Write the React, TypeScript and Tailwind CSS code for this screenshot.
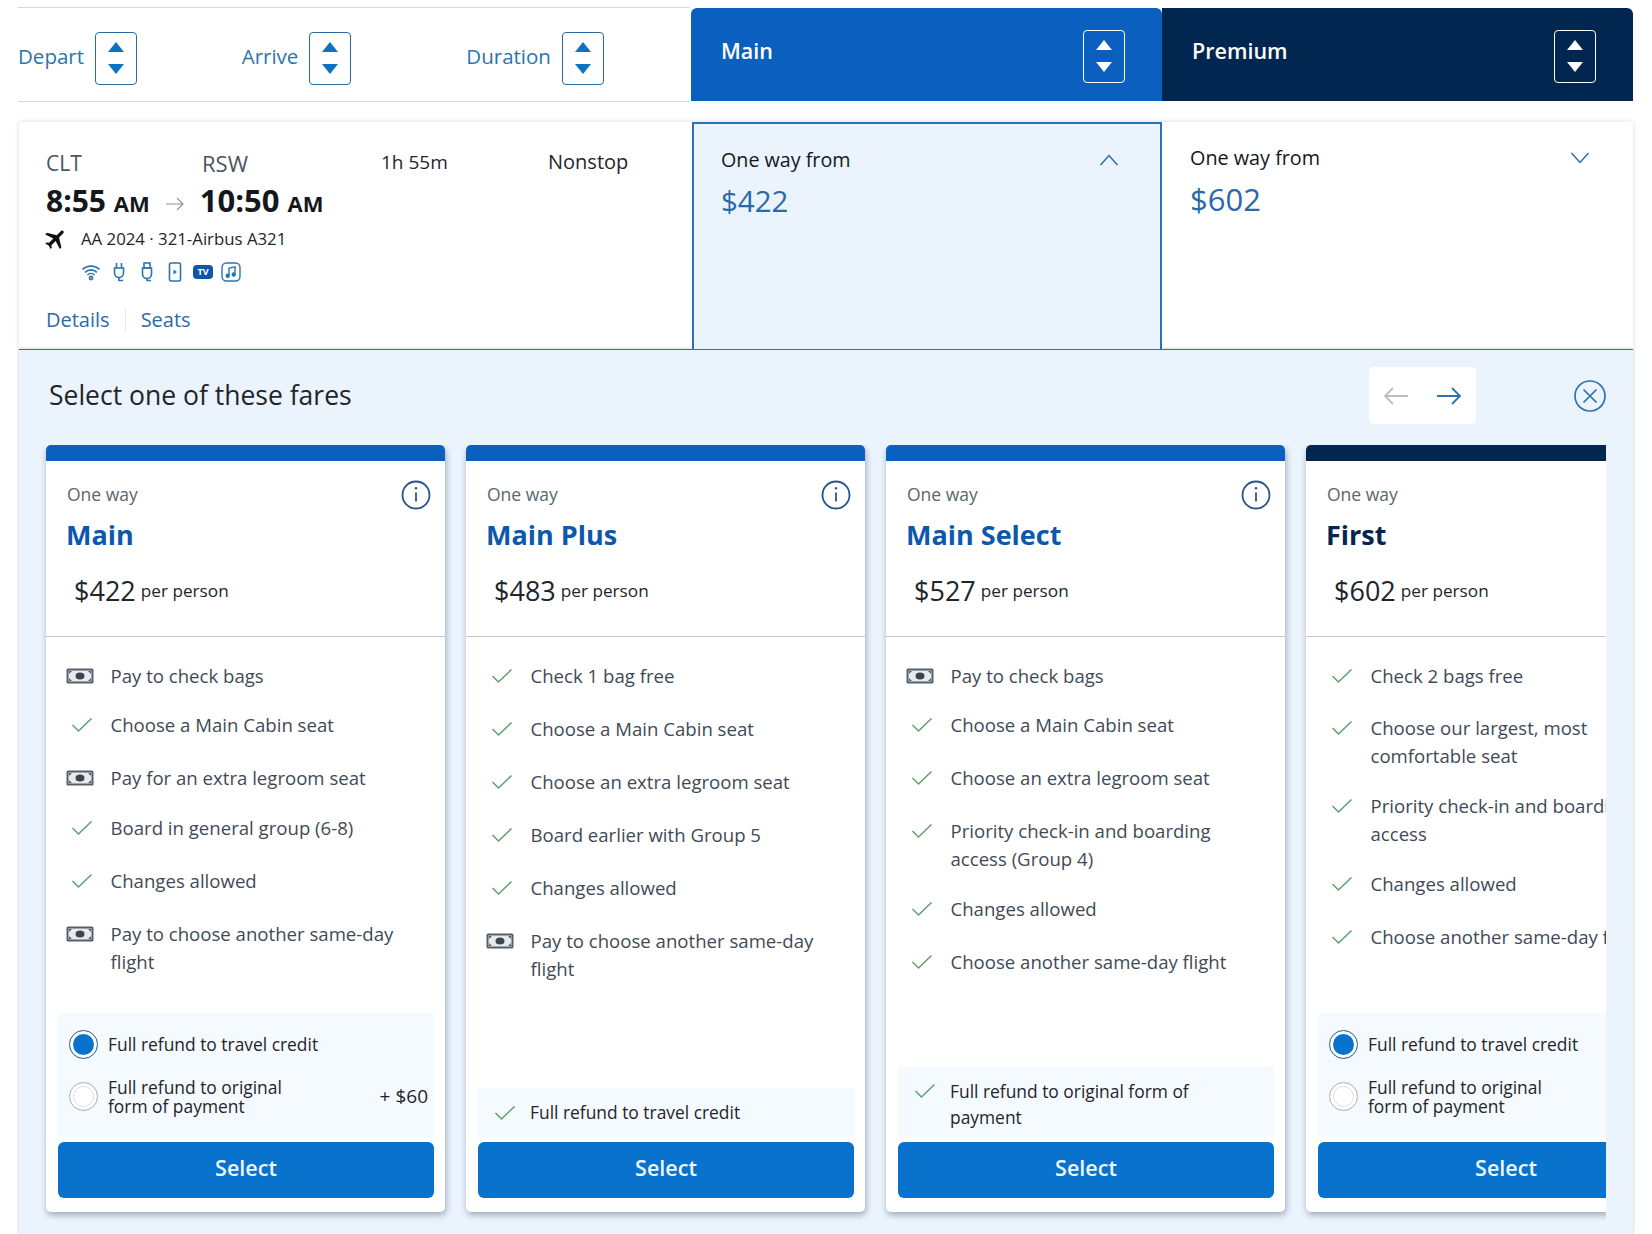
const sans = "font-['Open_Sans','Noto_Sans',sans-serif]";

function SortBox({ light }: { light?: boolean }) {
  const fill = light ? '#ffffff' : '#0b72c4';
  return (
    <div className={`w-[42px] h-[53px] shrink-0 rounded-[4px] border flex items-center justify-center ${light ? 'border-white' : 'border-[#2a6a9c]'}`}>
      <svg width="18" height="36" viewBox="0 0 18 36">
        <path d="M9 2 L17 12 H1 Z" fill={fill} />
        <path d="M9 34 L1 24 H17 Z" fill={fill} />
      </svg>
    </div>
  );
}

function SortItem({ label, w }: { label: string; w: string }) {
  return (
    <div className={`flex items-center gap-[11px] ${w}`}>
      <span className="text-[20.5px] -mt-[4px] text-[#2b74ad]">{label}</span>
      <SortBox />
    </div>
  );
}

function Check() {
  return (
    <svg width="22" height="16" viewBox="0 0 22 16" fill="none" stroke="#5f9f70" strokeWidth="1.5">
      <path d="M1.5 8 L7.5 14 L20.5 1.5" />
    </svg>
  );
}

function Money() {
  return (
    <svg width="28" height="16" viewBox="0 0 28 16">
      <rect x="0.5" y="0.5" width="27" height="15" rx="1.5" fill="#56606b" />
      <rect x="2.5" y="2.5" width="23" height="11" fill="#e8ebee" />
      <ellipse cx="14" cy="8" rx="4.5" ry="3.5" fill="#3c4650" />
      <path d="M3 3h3l-3 3zM25 3h-3l3 3zM3 13h3l-3-3zM25 13h-3l3-3z" fill="#56606b" />
    </svg>
  );
}

function Amenities() {
  const c = '#2b74ad';
  return (
    <div className="flex items-center gap-[8px] ml-[35px] mt-[10px] h-[22px]">
      <svg width="20" height="20" viewBox="0 0 20 20" fill="none" stroke={c} strokeWidth="1.6">
        <path d="M1.5 7.5 C6 3 14 3 18.5 7.5" />
        <path d="M4 10.3 C7.5 7 12.5 7 16 10.3" />
        <path d="M6.5 13 C8.5 11 11.5 11 13.5 13" />
        <circle cx="10" cy="16" r="1.6" />
      </svg>
      <svg width="20" height="20" viewBox="0 0 20 20" fill="none" stroke={c} strokeWidth="1.6">
        <path d="M7.5 1v5M12.5 1v5" />
        <path d="M5.5 6h9v5a4.5 4.5 0 0 1-9 0z" />
        <path d="M10 15.5v3h4" />
      </svg>
      <svg width="20" height="20" viewBox="0 0 20 20" fill="none" stroke={c} strokeWidth="1.6">
        <rect x="7" y="1" width="6" height="5" />
        <path d="M5.5 6h9v6a4.5 4.5 0 0 1-9 0z" />
        <path d="M10 16.5v2h4" />
      </svg>
      <svg width="20" height="20" viewBox="0 0 20 20" fill="none" stroke={c} strokeWidth="1.6">
        <rect x="4.5" y="1" width="11" height="18" rx="1.5" />
        <path d="M8.5 7.5 L12 10 L8.5 12.5 Z" fill={c} stroke="none" />
      </svg>
      <div className="w-[20px] h-[14px] rounded-[4px] bg-[#0d56a8] text-white text-[9px] font-bold leading-[14px] text-center">TV</div>
      <svg width="20" height="20" viewBox="0 0 20 20" fill="none" stroke={c} strokeWidth="1.4">
        <rect x="1" y="1" width="18" height="18" rx="4.5" />
        <path d="M8 13.5V6l6-1.2v7.5" strokeWidth="1.4" />
        <circle cx="6.7" cy="13.7" r="1.5" fill={c} />
        <circle cx="12.7" cy="12.5" r="1.5" fill={c} />
      </svg>
    </div>
  );
}

function Radio({ on }: { on?: boolean }) {
  return (
    <div className={`w-[29px] h-[29px] shrink-0 rounded-full border flex items-center justify-center bg-white ${on ? 'border-[#1b5c96]' : 'border-[#a9adb1]'}`}>
      <div className={`w-[21px] h-[21px] rounded-full ${on ? 'bg-[#0972cc]' : 'bg-white border border-[#dcdfe2]'}`} />
    </div>
  );
}

function RefundChoice({ extra }: { extra?: boolean }) {
  return (
    <div className="h-[124px] bg-[#f5faff] pl-[11px] pr-[6px] pt-[17px] text-[17.4px] text-[#1f252b]">
      <div className="flex items-center gap-[10px] h-[29px]">
        <Radio on />
        <span>Full refund to travel credit</span>
      </div>
      <div className="flex items-center gap-[10px] h-[40px] mt-[17px]">
        <Radio />
        <span className="leading-[19px] whitespace-pre flex-1 mt-[1px]">{'Full refund to original\nform of payment'}</span>
        {extra && <span className="text-[19px]">+ $60</span>}
      </div>
    </div>
  );
}

type Feat = { k: 'c' | 'm'; t: string; g: string };

const cards: { name: string; price: string; dark?: boolean; feats: Feat[]; bottom: React.ReactNode }[] = [
  {
    name: 'Main',
    price: '$422',
    feats: [
      { k: 'm', t: 'Pay to check bags', g: 'mb-[21px]' },
      { k: 'c', t: 'Choose a Main Cabin seat', g: 'mb-[25px]' },
      { k: 'm', t: 'Pay for an extra legroom seat', g: 'mb-[22px]' },
      { k: 'c', t: 'Board in general group (6-8)', g: 'mb-[25px]' },
      { k: 'c', t: 'Changes allowed', g: 'mb-[25px]' },
      { k: 'm', t: 'Pay to choose another same-day\nflight', g: '' },
    ],
    bottom: <RefundChoice extra />,
  },
  {
    name: 'Main Plus',
    price: '$483',
    feats: [
      { k: 'c', t: 'Check 1 bag free', g: 'mb-[25px]' },
      { k: 'c', t: 'Choose a Main Cabin seat', g: 'mb-[25px]' },
      { k: 'c', t: 'Choose an extra legroom seat', g: 'mb-[25px]' },
      { k: 'c', t: 'Board earlier with Group 5', g: 'mb-[25px]' },
      { k: 'c', t: 'Changes allowed', g: 'mb-[25px]' },
      { k: 'm', t: 'Pay to choose another same-day\nflight', g: '' },
    ],
    bottom: (
      <div className="h-[49px] bg-[#f5faff] flex items-center gap-[14px] pl-[16px] text-[17.4px] text-[#1f252b]">
        <Check />
        <span>Full refund to travel credit</span>
      </div>
    ),
  },
  {
    name: 'Main Select',
    price: '$527',
    feats: [
      { k: 'm', t: 'Pay to check bags', g: 'mb-[21px]' },
      { k: 'c', t: 'Choose a Main Cabin seat', g: 'mb-[25px]' },
      { k: 'c', t: 'Choose an extra legroom seat', g: 'mb-[25px]' },
      { k: 'c', t: 'Priority check-in and boarding\naccess (Group 4)', g: 'mb-[22px]' },
      { k: 'c', t: 'Changes allowed', g: 'mb-[25px]' },
      { k: 'c', t: 'Choose another same-day flight', g: '' },
    ],
    bottom: (
      <div className="h-[70px] bg-[#f5faff] flex items-center gap-[14px] pl-[16px] text-[17.4px] leading-[26px] text-[#1f252b]">
        <div className="self-start mt-[16px]"><Check /></div>
        <span className="whitespace-pre mt-[3px]">{'Full refund to original form of\npayment'}</span>
      </div>
    ),
  },
  {
    name: 'First',
    price: '$602',
    dark: true,
    feats: [
      { k: 'c', t: 'Check 2 bags free', g: 'mb-[24px]' },
      { k: 'c', t: 'Choose our largest, most\ncomfortable seat', g: 'mb-[22px]' },
      { k: 'c', t: 'Priority check-in and boarding\naccess', g: 'mb-[22px]' },
      { k: 'c', t: 'Changes allowed', g: 'mb-[25px]' },
      { k: 'c', t: 'Choose another same-day flight', g: '' },
    ],
    bottom: <RefundChoice />,
  },
];

function FareCard({ c }: { c: (typeof cards)[number] }) {
  return (
    <div className="w-[399px] h-[767px] shrink-0 flex flex-col bg-white rounded-[5px] shadow-[1px_3px_6px_rgba(40,60,90,0.4)]">
      <div className={`h-[16px] rounded-t-[5px] ${c.dark ? 'bg-[#01264f]' : 'bg-[#0b5fbf]'}`} />
      <div className="h-[176px] border-b border-[#c4c7ca] relative">
        <div className="pl-[21px] pt-[21px] text-[17.5px] leading-[24px] text-[#5a6670]">One way</div>
        <div className={`pl-[20px] mt-[12px] text-[27px] leading-[34px] font-bold ${c.dark ? 'text-[#01264f]' : 'text-[#0b58ad]'}`}>{c.name}</div>
        <div className="pl-[28px] mt-[21px] flex items-center gap-[5px] leading-[36px] text-[#20262c]">
          <span className="text-[27px]">{c.price}</span>
          <span className="text-[17.2px]">per person</span>
        </div>
        <svg className="absolute top-[19px] right-[14px]" width="30" height="30" viewBox="0 0 30 30" fill="none" stroke="#27548a" strokeWidth="1.8">
          <circle cx="15" cy="15" r="13.5" />
          <path d="M15 12.5v9" />
          <circle cx="15" cy="8.2" r="1.2" fill="#27548a" stroke="none" />
        </svg>
      </div>
      <div className="flex-1 pt-[25px] text-[18.6px] leading-[28px] text-[#3f4a56]">
        {c.feats.map((f) => (
          <div key={f.t} className={`flex ${f.g}`}>
            <div className="w-[64.5px] h-[28px] shrink-0 flex items-center pl-[20px]">
              {f.k === 'c' ? <div className="ml-[5px] flex"><Check /></div> : <Money />}
            </div>
            <div className="whitespace-pre">{f.t}</div>
          </div>
        ))}
      </div>
      <div className="pl-[12px] pr-[11px]">{c.bottom}</div>
      <div className="pl-[12px] pr-[11px] pt-[5px] pb-[14px]">
        <div className="h-[56px] pb-[4px] rounded-[6px] bg-[#0972cc] flex items-center justify-center text-[21.5px] font-semibold text-[#eef7ff]">Select</div>
      </div>
    </div>
  );
}

export default function App() {
  return (
    <div className={`w-[1652px] h-[1234px] overflow-hidden bg-white ${sans}`}>
      <div className="ml-[19px] w-[1614px] pt-[7px] flex">
        <div className="w-[672px] h-[95px] border-y border-[#d8d8d8] flex items-center pt-[7px] -ml-px">
          <SortItem label="Depart" w="w-[224px]" />
          <SortItem label="Arrive" w="w-[225px]" />
          <SortItem label="Duration" w="w-[224px]" />
        </div>
        <div className="w-[471px] h-[93px] mt-[1px] ml-px bg-[#0b5fbf] rounded-tl-[6px] rounded-tr-[6px] flex items-center justify-between pl-[30px] pr-[37px] text-white">
          <span className="text-[21.5px] font-semibold -mt-[6px]">Main</span>
          <div className="mt-[3px]"><SortBox light /></div>
        </div>
        <div className="w-[471px] h-[93px] mt-[1px] bg-[#01264f] rounded-tr-[6px] flex items-center justify-between pl-[30px] pr-[37px] text-white">
          <span className="text-[21.5px] font-semibold -mt-[6px]">Premium</span>
          <div className="mt-[3px]"><SortBox light /></div>
        </div>
      </div>

      <div className="ml-[19px] w-[1614px] mt-[20px] h-[227px] flex bg-white rounded-t-[4px] shadow-[0_0_5px_rgba(0,0,0,0.16)]">
        <div className="w-[673px] pl-[27px] pt-[27px]">
          <div className="flex items-center leading-[28px]">
            <span className="w-[156px] text-[21px] text-[#4b5560]">CLT</span>
            <span className="w-[179px] text-[22px] -mt-[1px] text-[#4b5560]">RSW</span>
            <span className="w-[167px] text-[19px] -mt-[2px] text-[#1f252b]">1h 55m</span>
            <span className="text-[20px] -mt-[2px] text-[#1f252b]">Nonstop</span>
          </div>
          <div className="flex items-baseline mt-[5px] h-[36px] font-bold text-[#14181c]">
            <span className="text-[30px] leading-[36px]">8:55 <span className="text-[22px]">AM</span></span>
            <svg className="mx-[15px]" width="20" height="16" viewBox="0 0 20 16" fill="none" stroke="#8c969f" strokeWidth="1.2">
              <path d="M1 8h17M12 2l6 6-6 6" />
            </svg>
            <span className="text-[31px] leading-[36px]">10:50 <span className="text-[22px]">AM</span></span>
          </div>
          <div className="flex items-center mt-[9px] h-[24px]">
            <svg className="w-[26px] h-[26px] rotate-45 -ml-[3px]" viewBox="0 0 24 24" fill="#111">
              <path d="M21 16v-2l-8-5V3.5c0-.83-.67-1.5-1.5-1.5S10 2.67 10 3.5V9l-8 5v2l8-2.5V19l-2 1.5V22l3.5-1 3.5 1v-1.5L13 19v-5.5l8 2.5z" />
            </svg>
            <span className="ml-[12px] text-[16.8px] text-[#1f252b]">AA 2024 · 321-Airbus A321</span>
          </div>
          <Amenities />
          <div className="flex items-center mt-[24px] text-[20px] leading-[26px] text-[#2b6aa8]">
            <span>Details</span>
            <span className="w-px h-[22px] bg-[#e3e6e9] mx-[15px]" />
            <span>Seats</span>
          </div>
        </div>
        <div className="w-[470px] bg-[#ebf3fd] border-x-2 border-t-2 border-[#2a72b8] pl-[27px] pr-[41px] pt-[21px]">
          <div className="flex items-center justify-between text-[19.7px] leading-[30px] text-[#14181c]">
            <span>One way from</span>
            <svg width="20" height="12" viewBox="0 0 20 12" fill="none" stroke="#2b6aa8" strokeWidth="1.5">
              <path d="M1.5 11 L10 1.5 L18.5 11" />
            </svg>
          </div>
          <div className="mt-[5px] text-[29.5px] leading-[42px] text-[#2b6aa8]">$422</div>
        </div>
        <div className="flex-1 pl-[28px] pr-[43px] pt-[21px]">
          <div className="flex items-center justify-between text-[19.8px] leading-[30px] text-[#14181c]">
            <span>One way from</span>
            <svg width="20" height="12" viewBox="0 0 20 12" fill="none" stroke="#2b6aa8" strokeWidth="1.5">
              <path d="M1.5 1 L10 10.5 L18.5 1" />
            </svg>
          </div>
          <div className="mt-[5px] text-[31px] leading-[42px] text-[#2b6aa8]">$602</div>
        </div>
      </div>

      <div className="ml-[19px] w-[1614px] h-[885px] bg-[#ebf3fd] border-t border-[#2a72b8] shadow-[0_0_3px_rgba(0,0,0,0.25)]">
        <div className="flex items-center h-[95px] pb-[4px]">
          <div className="ml-[30px] text-[26.5px] text-[#1f252b]">Select one of these fares</div>
          <div className="ml-auto w-[107px] h-[57px] bg-white rounded-[5px] flex items-center justify-center gap-[27px]">
            <svg width="26" height="20" viewBox="0 0 26 20" fill="none" stroke="#b6bfc7" strokeWidth="1.8">
              <path d="M25 10H2M10 2l-8 8 8 8" />
            </svg>
            <svg width="26" height="20" viewBox="0 0 26 20" fill="none" stroke="#2b74ad" strokeWidth="1.8">
              <path d="M1 10h23M16 2l8 8-8 8" />
            </svg>
          </div>
          <svg className="ml-[98px] mr-[27px]" width="32" height="32" viewBox="0 0 32 32" fill="none" stroke="#2b74ad" strokeWidth="1.7">
            <circle cx="16" cy="16" r="15" />
            <path d="M9.5 9.5l13 13M22.5 9.5l-13 13" />
          </svg>
        </div>
        <div className="ml-[19px] w-[1568px] pl-[8px] flex gap-[21px] overflow-hidden pb-[12px]">
          {cards.map((c) => (
            <FareCard key={c.name} c={c} />
          ))}
        </div>
      </div>
    </div>
  );
}
